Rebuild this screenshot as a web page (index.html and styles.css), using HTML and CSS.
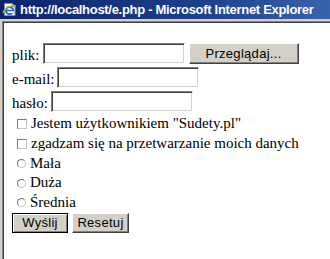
FILE: index.html
```html
<!DOCTYPE html>
<html lang="pl">
<head>
<meta charset="utf-8">
<title>http://localhost/e.php - Microsoft Internet Explorer</title>
<link rel="stylesheet" href="styles.css">
</head>
<body>
<div class="window">
  <div class="titlebar">
    <svg class="app-icon" width="15" height="15" viewBox="0 0 15 15" aria-hidden="true">
      <path d="M2.5 1.5 H10 L13 4.5 V13.5 H2.5 Z" fill="#ffffff" stroke="#7d8fb3" stroke-width="1"/>
      <path d="M10 1.5 V4.5 H13" fill="#dfe6f2" stroke="#7d8fb3" stroke-width="1"/>
      <circle cx="7.5" cy="8.5" r="3.6" fill="none" stroke="#1f6fd6" stroke-width="2"/>
      <rect x="4" y="7.8" width="7.2" height="1.6" fill="#1f6fd6"/>
      <rect x="8.6" y="9.4" width="3.2" height="1.6" fill="#ffffff"/>
      <path d="M1 11 C3 5 10 2.5 14 4" fill="none" stroke="#e8b020" stroke-width="1.2"/>
    </svg>
    <span class="title">http://localhost/e.php - Microsoft Internet Explorer</span>
  </div>
  <div class="viewport">
    <form class="form">
      <div class="field-row">
        <span class="label">plik:</span>
        <input class="text-input" type="text">
        <button type="button" class="btn btn-browse">Przeglądaj...</button>
      </div>
      <div class="field-row">
        <span class="label">e-mail:</span>
        <input class="text-input" type="text">
      </div>
      <div class="field-row">
        <span class="label">hasło:</span>
        <input class="text-input" type="password">
      </div>
      <div class="options">
        <label class="option-row"><input type="checkbox" class="checkbox"><span>Jestem użytkownikiem "Sudety.pl"</span></label>
        <label class="option-row"><input type="checkbox" class="checkbox"><span>zgadzam się na przetwarzanie moich danych</span></label>
        <label class="option-row"><input type="radio" name="size" class="radio"><span>Mała</span></label>
        <label class="option-row"><input type="radio" name="size" class="radio"><span>Duża</span></label>
        <label class="option-row"><input type="radio" name="size" class="radio"><span>Średnia</span></label>
        <div class="button-row">
          <button type="button" class="btn btn-default btn-send">Wyślij</button>
          <button type="button" class="btn btn-reset">Resetuj</button>
        </div>
      </div>
    </form>
  </div>
</div>
</body>
</html>
```
FILE: styles.css
```css
html, body {
  margin: 0;
  padding: 0;
}

body {
  width: 330px;
  height: 259px;
  overflow: hidden;
  background: #d4d0c8;
}

.window {
  width: 330px;
  height: 259px;
  display: flex;
  flex-direction: column;
  background: #d4d0c8;
}

.titlebar {
  height: 19px;
  flex: none;
  display: flex;
  align-items: center;
  background: linear-gradient(90deg, #0a246a 0%, #1e3f8a 60%, #3a62ab 100%);
  white-space: nowrap;
  overflow: hidden;
}

.app-icon {
  flex: none;
  margin-left: 2px;
  margin-right: 3px;
}

.title {
  font-family: "Liberation Sans", Arial, sans-serif;
  font-weight: bold;
  font-size: 13px;
  letter-spacing: -0.3px;
  line-height: 18px;
  color: #ffffff;
}

.viewport {
  flex: 1;
  margin-top: 2px;
  margin-left: 2px;
  background: #ffffff;
  border-top: 1px solid #808080;
  border-left: 1px solid #808080;
  box-shadow: inset 1px 1px 0 #404040;
  padding: 19px 0 0 9px;
  font-family: "Liberation Serif", "Times New Roman", serif;
  font-size: 15px;
  color: #000000;
}

.form {
  margin: 0;
}

.field-row {
  height: 24px;
  display: flex;
  align-items: center;
  gap: 3px;
}

.label {
  padding-top: 5px;
  line-height: 17px;
}

.text-input {
  box-sizing: border-box;
  width: 142px;
  height: 21px;
  margin: 0;
  padding: 0 2px;
  border: 1px solid;
  border-color: #808080 #ffffff #ffffff #808080;
  box-shadow: inset 1px 1px 0 #404040, inset -1px -1px 0 #d4d0c8;
  background: #ffffff;
  font-family: "Liberation Sans", Arial, sans-serif;
  font-size: 13px;
  outline: none;
}

.btn {
  box-sizing: border-box;
  margin: 0;
  padding: 0;
  background: #d4d0c8;
  border: 1px solid;
  border-color: #ffffff #404040 #404040 #ffffff;
  box-shadow: inset -1px -1px 0 #808080;
  font-family: "Liberation Sans", Arial, sans-serif;
  font-size: 13px;
  letter-spacing: 0.3px;
  color: #000000;
  text-align: center;
}

.btn-browse {
  width: 110px;
  height: 21px;
  margin-left: 1px;
}

.btn-default {
  border-color: #000000;
  box-shadow: inset 1px 1px 0 #ffffff, inset -1px -1px 0 #808080;
}

.options {
  margin-top: 1px;
}

.option-row {
  height: 19.75px;
  display: flex;
  align-items: center;
  line-height: 19.75px;
}

.checkbox {
  appearance: none;
  -webkit-appearance: none;
  box-sizing: border-box;
  width: 10px;
  height: 10px;
  margin: 0 4px 0 5px;
  background: #ffffff;
  border: 1px solid;
  border-color: #7a7a7a #c9c5bd #c9c5bd #7a7a7a;
  flex: none;
}

.radio {
  appearance: none;
  -webkit-appearance: none;
  box-sizing: border-box;
  width: 9px;
  height: 9px;
  margin: 0 4px 0 5px;
  border-radius: 50%;
  background: #ffffff;
  border: 1px solid;
  border-color: #6f6f6f #c9c5bd #c9c5bd #6f6f6f;
  flex: none;
}

.button-row {
  height: 20px;
  display: flex;
  align-items: center;
  gap: 4px;
}

.btn-send {
  width: 56px;
  height: 20px;
}

.btn-reset {
  width: 57px;
  height: 20px;
}
```
